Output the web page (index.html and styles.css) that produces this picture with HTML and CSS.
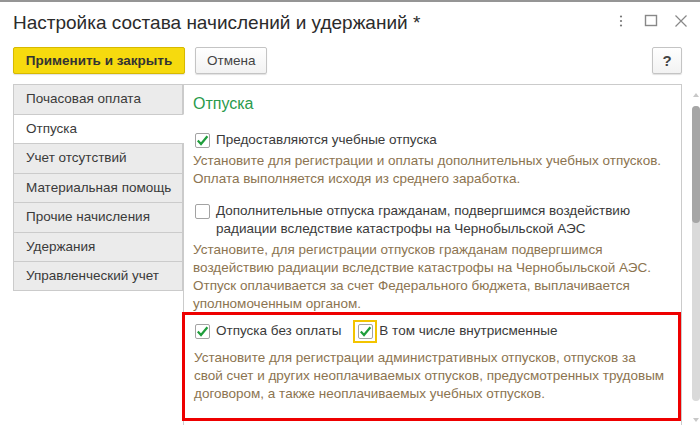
FILE: index.html
```html
<!DOCTYPE html>
<html lang="ru">
<head>
<meta charset="utf-8">
<link rel="stylesheet" href="styles.css">
</head>
<body>
<div class="window">
  <div class="titlebar">
    <div class="title">Настройка состава начислений и удержаний *</div>
    <div class="wincontrols">
      <svg class="wc" width="14" height="14" viewBox="0 0 14 14"><circle cx="7" cy="2.5" r="1.1" fill="#777"/><circle cx="7" cy="7" r="1.1" fill="#777"/><circle cx="7" cy="11.5" r="1.1" fill="#777"/></svg>
      <svg class="wc" width="14" height="14" viewBox="0 0 14 14"><rect x="1.5" y="1.5" width="11" height="10" fill="none" stroke="#888" stroke-width="1.4"/></svg>
      <svg class="wc" width="14" height="14" viewBox="0 0 14 14"><path d="M1.5 1.5 L12.5 12.5 M12.5 1.5 L1.5 12.5" stroke="#888" stroke-width="1.2"/></svg>
    </div>
  </div>
  <div class="toolbar">
    <button class="btn btn-primary">Применить и закрыть</button>
    <button class="btn">Отмена</button>
    <div class="spacer"></div>
    <button class="btn btn-help">?</button>
  </div>
  <div class="main">
    <div class="tabs">
      <div class="tab">Почасовая оплата</div>
      <div class="tab active">Отпуска</div>
      <div class="tab">Учет отсутствий</div>
      <div class="tab">Материальная помощь</div>
      <div class="tab">Прочие начисления</div>
      <div class="tab">Удержания</div>
      <div class="tab">Управленческий учет</div>
    </div>
    <div class="panel">
      <div class="heading">Отпуска</div>
      <div class="group">
        <label class="check-row">
          <span class="cb checked"><svg width="13" height="13" viewBox="0 0 13 13"><path d="M1.8 6.6 L5 10 L11.4 2.2" fill="none" stroke="#1f9e3c" stroke-width="2.2"/></svg></span>
          <span class="label">Предоставляются учебные отпуска</span>
        </label>
        <div class="desc">Установите для регистрации и оплаты дополнительных учебных отпусков.<br>Оплата выполняется исходя из среднего заработка.</div>
      </div>
      <div class="group">
        <label class="check-row">
          <span class="cb"></span>
          <span class="label">Дополнительные отпуска гражданам, подвергшимся воздействию<br>радиации вследствие катастрофы на Чернобыльской АЭС</span>
        </label>
        <div class="desc">Установите, для регистрации отпусков гражданам подвергшимся<br>воздействию радиации вследствие катастрофы на Чернобыльской АЭС.<br>Отпуск оплачивается за счет Федерального бюджета, выплачивается<br>уполномоченным органом.</div>
      </div>
      <div class="highlight">
        <div class="check-line">
          <label class="check-row">
            <span class="cb checked"><svg width="13" height="13" viewBox="0 0 13 13"><path d="M1.8 6.6 L5 10 L11.4 2.2" fill="none" stroke="#1f9e3c" stroke-width="2.2"/></svg></span>
            <span class="label">Отпуска без оплаты</span>
          </label>
          <label class="check-row focused">
            <span class="focus-ring"><span class="cb checked"><svg width="13" height="13" viewBox="0 0 13 13"><path d="M1.8 6.6 L5 10 L11.4 2.2" fill="none" stroke="#1f9e3c" stroke-width="2.2"/></svg></span></span>
            <span class="label">В том числе внутрисменные</span>
          </label>
        </div>
        <div class="desc">Установите для регистрации административных отпусков, отпусков за<br>свой счет и других неоплачиваемых отпусков, предусмотренных трудовым<br>договором, а также неоплачиваемых учебных отпусков.</div>
      </div>
    </div>
    <div class="scrollbar">
      <div class="arrow up"></div>
      <div class="track"><div class="thumb"></div></div>
      <div class="arrow down"></div>
    </div>
  </div>
</div>
</body>
</html>
```

FILE: styles.css
```css
* { box-sizing: border-box; }
html, body { margin: 0; padding: 0; }
body {
  width: 700px;
  height: 436px;
  overflow: hidden;
  background: #fff;
  font-family: "Liberation Sans", Arial, sans-serif;
  color: #333;
}
.window {
  border-top: 2px solid #959595;
  height: 436px;
}
.titlebar {
  display: flex;
  align-items: center;
  height: 38px;
  padding: 0 12px 0 13px;
}
.title {
  font-size: 19px;
  color: #2b2b2b;
  flex: 1;
  padding-top: 3px;
}
.wincontrols {
  display: flex;
  gap: 16px;
  align-items: center;
}
.toolbar {
  display: flex;
  align-items: center;
  height: 27px;
  margin-top: 7px;
  padding: 0 18px 0 13px;
  gap: 10px;
}
.spacer { flex: 1; }
.btn {
  height: 27px;
  border: 1px solid #c4c4c4;
  border-radius: 2px;
  background: linear-gradient(#ffffff, #f2f2f2);
  box-shadow: 0 1px 1px rgba(0,0,0,0.12);
  font-family: "Liberation Sans", Arial, sans-serif;
  font-size: 13.5px;
  color: #444;
  padding: 0 11px;
}
.btn-primary {
  width: 172px;
  background: #f6da0e;
  border-color: #d7b900;
  font-weight: bold;
  color: #333;
}
.btn-help {
  width: 30px;
  padding: 0;
  font-weight: bold;
  font-size: 15px;
}
.main {
  display: flex;
  margin-top: 10px;
  padding-left: 13px;
}
.tabs {
  width: 171px;
  display: flex;
  flex-direction: column;
}
.tab {
  height: 29.5px;
  line-height: 28px;
  padding-left: 12px;
  background: #ebebeb;
  border: 1px solid #cbcbcb;
  border-bottom: none;
  font-size: 13.5px;
  color: #3a3a3a;
}
.tab:last-child { border-bottom: 1px solid #cbcbcb; height: 30px; }
.tab.active {
  background: #fff;
  border-right-color: #fff;
  position: relative;
  margin-right: -1px;
  z-index: 1;
}
.panel {
  width: 499px;
  height: 341px;
  border: 1px solid #cbcbcb;
  border-bottom: none;
  padding: 9px 0 0 0;
}
.heading {
  font-size: 16px;
  line-height: 19px;
  color: #2a9a4c;
  padding-left: 9px;
  height: 37px;
}
.group {
  padding: 0 9px;
  margin-bottom: 14px;
}
.group + .highlight { margin-top: -15px; }
.check-row {
  display: flex;
  align-items: flex-start;
  gap: 6px;
  padding-left: 2px;
}
.cb {
  flex: none;
  width: 15px;
  height: 15px;
  border: 1px solid #a3a3a3;
  border-radius: 2px;
  background: #fff;
  display: flex;
  align-items: center;
  justify-content: center;
  margin-top: 2px;
}
.label {
  font-size: 13.5px;
  line-height: 18px;
  color: #3a3a3a;
}
.desc {
  font-size: 13.5px;
  line-height: 18px;
  color: #8c7450;
  margin-top: 3px;
}
.highlight {
  border: 3px solid #ee0000;
  margin-left: -2px;
  width: 499px;
  padding: 4px 9px 15px 9px;
}
.highlight .check-row { padding-left: 1px; }
.highlight .desc { margin-top: 6px; }
.check-line {
  display: flex;
  align-items: center;
  gap: 12px;
  height: 24px;
}
.check-line .cb { margin-top: 0; }
.check-line .check-row { align-items: center; }
.focus-ring {
  display: flex;
  align-items: center;
  justify-content: center;
  width: 24px;
  height: 23px;
  border: 2px solid #f3c400;
}
.highlight .focused { gap: 2px; padding-left: 0; }
.scrollbar {
  width: 8px;
  margin-left: 10px;
  display: flex;
  flex-direction: column;
  align-items: center;
  padding-top: 9px;
}
.arrow {
  width: 0;
  height: 0;
  border-left: 3px solid transparent;
  border-right: 3px solid transparent;
}
.arrow.up { border-bottom: 4px solid #c8c8c8; }
.arrow.down { border-top: 4px solid #c8c8c8; margin-top: 17px; }
.track {
  width: 8px;
  height: 295px;
  margin-top: 9px;
  border-radius: 4px;
  background: #dadada;
}
.thumb {
  height: 117px;
  border-radius: 4px;
  background: #a6a6a6;
}
```
